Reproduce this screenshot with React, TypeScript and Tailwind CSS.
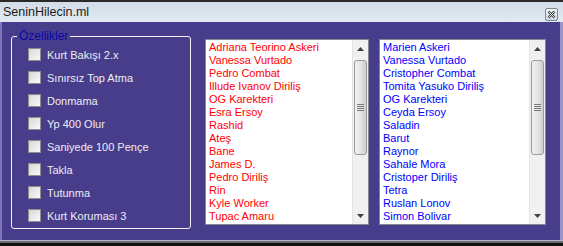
import React from 'react';

const features = [
  'Kurt Bakışı 2.x',
  'Sınırsız Top Atma',
  'Donmama',
  'Yp 400 Olur',
  'Saniyede 100 Pençe',
  'Takla',
  'Tutunma',
  'Kurt Koruması 3',
];

const redList = [
  'Adriana Teorino Askeri',
  'Vanessa Vurtado',
  'Pedro Combat',
  'Illude Ivanov Diriliş',
  'OG Karekteri',
  'Esra Ersoy',
  'Rashid',
  'Ateş',
  'Bane',
  'James D.',
  'Pedro Diriliş',
  'Rin',
  'Kyle Worker',
  'Tupac Amaru',
];

const blueList = [
  'Marien Askeri',
  'Vanessa Vurtado',
  'Cristopher Combat',
  'Tomita Yasuko Diriliş',
  'OG Karekteri',
  'Ceyda Ersoy',
  'Saladin',
  'Barut',
  'Raynor',
  'Sahale Mora',
  'Cristoper Diriliş',
  'Tetra',
  'Ruslan Lonov',
  'Simon Bolivar',
];

const font = { fontFamily: '"Liberation Sans", Arial, sans-serif' };

const Checkbox: React.FC<{ label: string }> = ({ label }) => (
  <div className="h-[23px] flex items-start gap-[6px]">
    <div className="w-[13px] h-[13px] border border-[#8e8f8f] bg-gradient-to-br from-[#d2d2d2] to-[#fafafa] p-[1px]">
      <div className="w-full h-full bg-gradient-to-br from-[#dcdcdc] to-[#f6f6f6]" />
    </div>
    <span className="text-[11px] leading-[14px] text-[#ececf2]">{label}</span>
  </div>
);

const Scrollbar: React.FC = () => (
  <div className="w-[16px] h-full bg-[#f0f0f0] border-l border-[#e4e4e4] flex flex-col">
    {/* up arrow */}
    <div className="h-[17px] flex items-center justify-center">
      <svg width="7" height="4" viewBox="0 0 7 4">
        <polygon points="3.5,0 7,4 0,4" fill="#404040" />
      </svg>
    </div>
    {/* thumb */}
    <div className="mt-[3px] mx-[1px] h-[95px] rounded-[3px] border border-[#9a9a9a] bg-gradient-to-r from-[#f2f2f2] via-[#e4e4e4] to-[#cfcfcf] flex flex-col items-center justify-center gap-[1px]">
      <div className="w-[7px] h-[1px] bg-[#7a7a7a]" />
      <div className="w-[7px] h-[1px] bg-[#7a7a7a]" />
      <div className="w-[7px] h-[1px] bg-[#7a7a7a]" />
      <div className="w-[7px] h-[1px] bg-[#7a7a7a]" />
    </div>
    <div className="flex-1" />
    {/* down arrow */}
    <div className="h-[17px] flex items-center justify-center">
      <svg width="7" height="4" viewBox="0 0 7 4">
        <polygon points="0,0 7,0 3.5,4" fill="#404040" />
      </svg>
    </div>
  </div>
);

const ListBox: React.FC<{ items: string[]; color: string; width: string }> = ({ items, color, width }) => (
  <div className={`${width} h-[186px] mt-[17px] bg-white border border-[#828790] flex`}>
    <div className={`flex-1 pl-[3px] pt-[1px] ${color}`}>
      {items.map((item, i) => (
        <div key={i} className="text-[11px] leading-[13px] whitespace-nowrap">
          {item}
        </div>
      ))}
    </div>
    <Scrollbar />
  </div>
);

export default function App() {
  return (
    <div className="w-[563px] h-[246px] flex flex-col bg-[#141414]" style={font}>
      <div className="h-[2px] bg-[#2a2a2a]" />

      {/* Title bar */}
      <div className="h-[20px] bg-gradient-to-b from-[#d3dde8] to-[#e2e9f1] flex items-center justify-between pl-[3px] pr-[5px]">
        <span className="text-[12.5px] text-[#1c1c1c] leading-none">SeninHilecin.ml</span>
        <div className="w-[13px] h-[13px] mt-[5px] rounded-[2px] border border-[#7d8a99] bg-gradient-to-b from-[#f4f6f9] to-[#cfd7e1] flex items-center justify-center">
          <svg width="9" height="9" viewBox="0 0 9 9">
            <path d="M1.5 1.5 L7.5 7.5 M7.5 1.5 L1.5 7.5" stroke="#3a3a3a" strokeWidth="2.4" />
            <path d="M1.5 1.5 L7.5 7.5 M7.5 1.5 L1.5 7.5" stroke="#f4f4f4" strokeWidth="0.9" />
          </svg>
        </div>
      </div>

      {/* Body */}
      <div className="h-[218px] bg-[#483d8b] border-l-2 border-r-[3px] border-l-[#7e76b8] border-r-[#9a94c8] flex items-start pl-[9px]">
        {/* Group box */}
        <div className="relative mt-[14px] w-[180px] h-[193px] border border-[#f4f4f8] rounded-[3px] pl-[16px] pt-[11px]">
          <span className="absolute -top-[8px] left-[5px] px-[2px] bg-[#483d8b] text-[12px] leading-[14px] text-[#0808a8]">
            Özellikler
          </span>
          {features.map((f) => (
            <Checkbox key={f} label={f} />
          ))}
        </div>

        <div className="ml-[14px]">
          <ListBox items={redList} color="text-[#ff0000]" width="w-[164px]" />
        </div>
        <div className="ml-[10px]">
          <ListBox items={blueList} color="text-[#0000ff]" width="w-[167px]" />
        </div>
      </div>

      <div className="h-[1px] bg-[#b8b4d4]" />
      <div className="h-[2px] bg-[#6a6a6a]" />
      <div className="flex-1 bg-[#101010]" />
    </div>
  );
}
